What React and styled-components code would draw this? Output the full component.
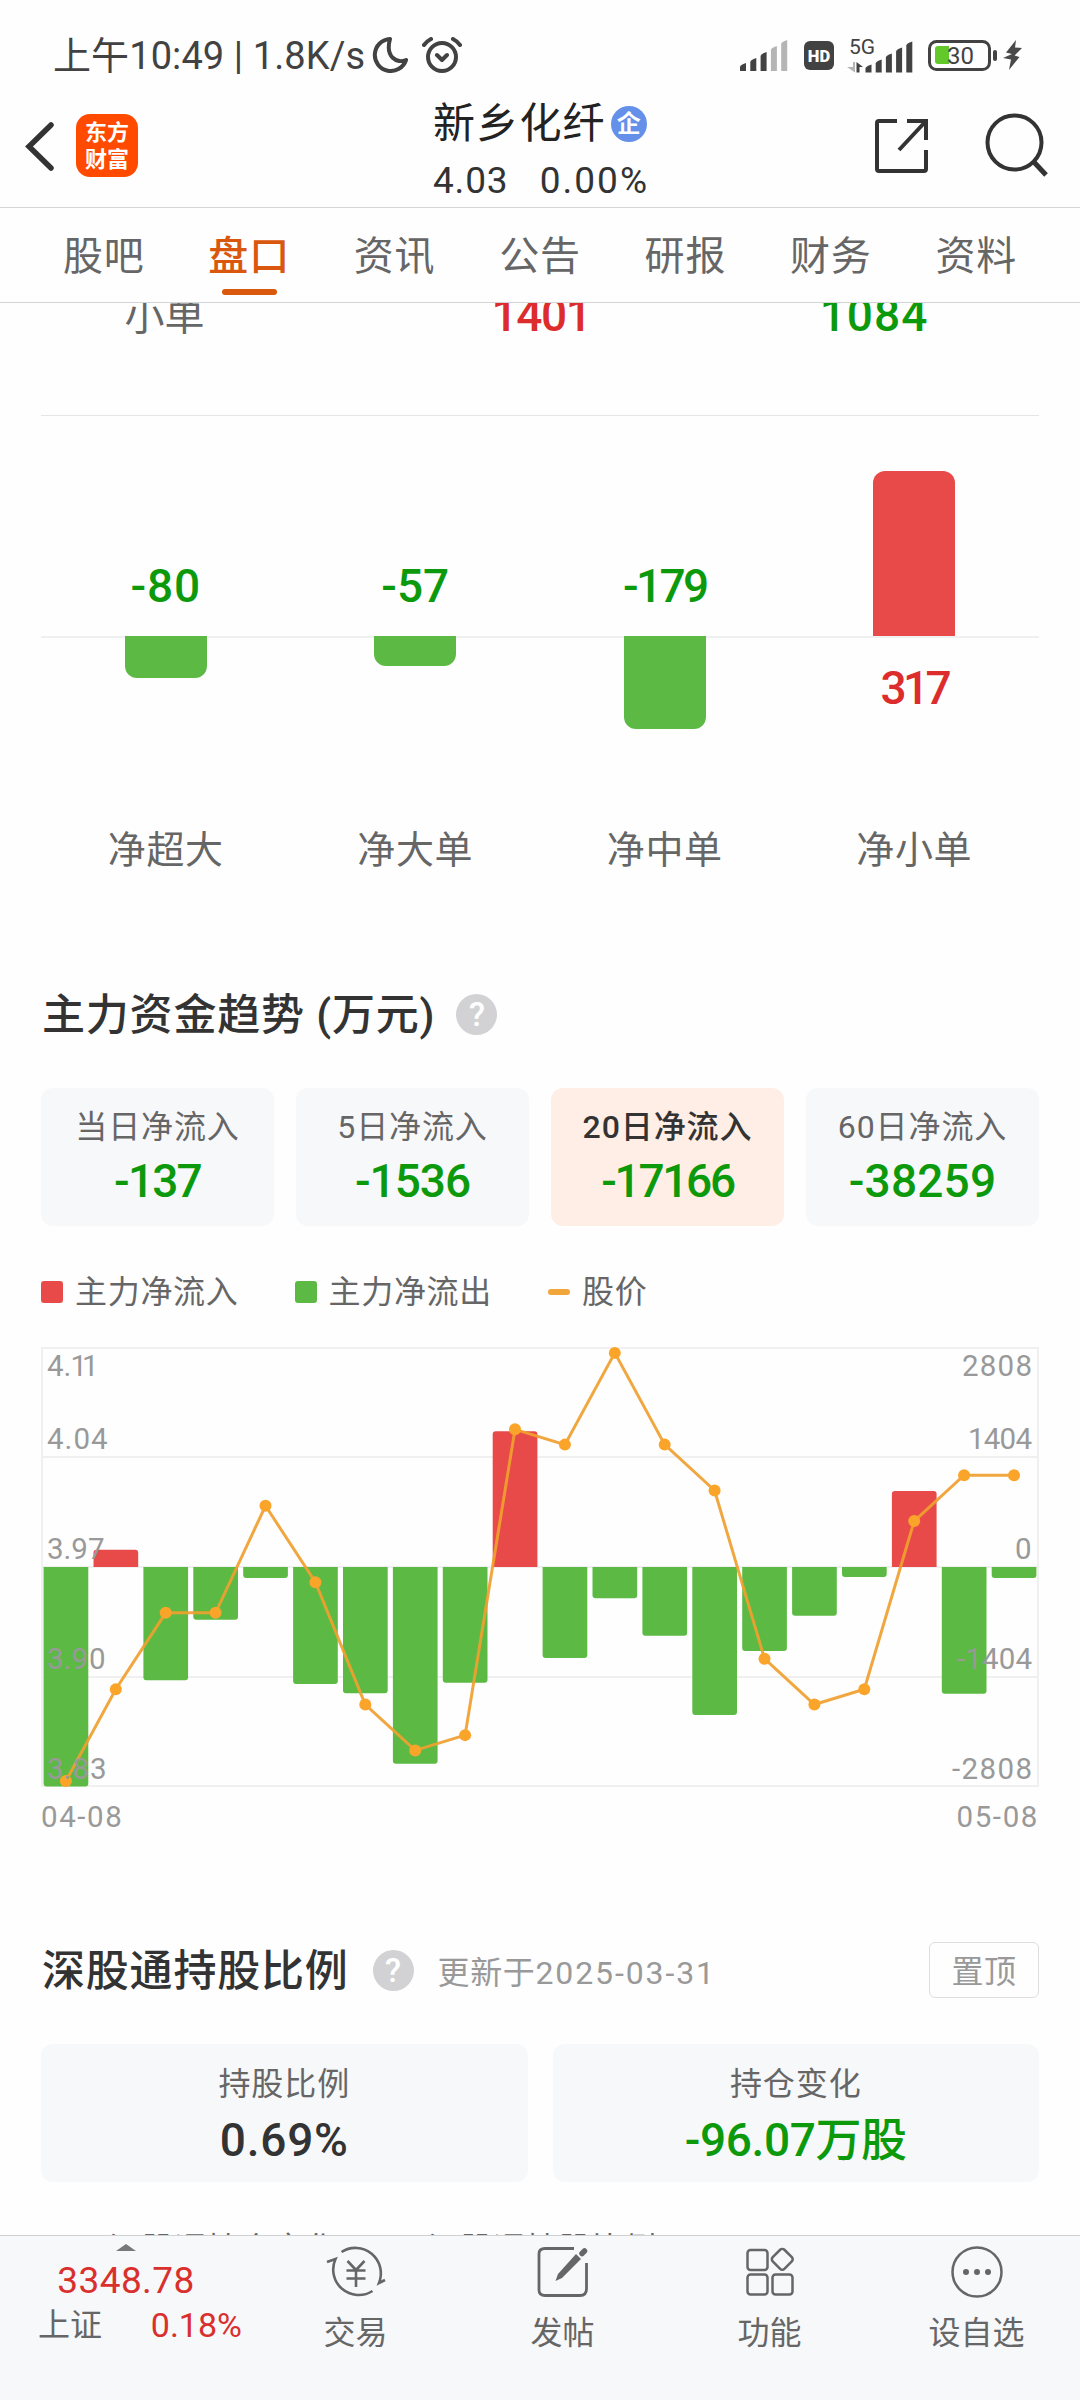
import styled, { createGlobalStyle } from 'styled-components'

const GlobalStyle = createGlobalStyle`
    * {
        box-sizing: border-box;
    }
    body {
        margin: 0;
        background: #fefefe;
        font-family: Roboto, "Noto Sans CJK SC", sans-serif;
        color: #333333;
    }
    svg {
        display: block;
        flex: none;
    }
`;

const Screen = styled.div`
    display: flex;
    flex-direction: column;
    width: 1080px;
    height: 2400px;
    overflow: hidden;
    background: #fefefe;
`;

/* status bar */
const StatusBar = styled.div`
    display: flex;
    align-items: center;
    height: 84px;
    padding: 26px 56px 0 53px;
    color: #424242;
`;
const StatusTime = styled.span`
    width: 319px;
    padding-top: 1px;
    font-size: 38px;
    line-height: 56px;
    letter-spacing: 0.1px;
    white-space: nowrap;
`;
const StatusIcons = styled.div`
    display: flex;
    align-items: center;
    margin-left: ${props => props.$right ? 'auto' : '0'};
    gap: ${props => props.$gap}px;
`;

/* header */
const Header = styled.div`
    display: grid;
    grid-template-columns: 1fr auto 1fr;
    height: 124px;
    border-bottom: 1px solid #d3d5d6;
`;
const HeaderLeft = styled.div`
    display: flex;
    align-items: flex-start;
    gap: 20px;
    padding: 30px 0 0 24px;
`;
const AppLogo = styled.div`
    display: grid;
    grid-template-columns: 22px 22px;
    align-content: center;
    justify-content: center;
    width: 62px;
    height: 63px;
    border-radius: 14px;
    background: #ff4a00;
    color: white;
    font-size: 22px;
    font-weight: 700;
    line-height: 27px;
`;
const HeaderTitle = styled.div`
    display: flex;
    flex-direction: column;
    width: 214px;
`;
const StockName = styled.div`
    display: flex;
    align-items: center;
    gap: 5px;
    height: 72px;
    padding-top: 7px;
    font-size: 42px;
    line-height: 66px;
    letter-spacing: 1.2px;
    color: #222222;
    white-space: nowrap;
`;
const CompanyBadge = styled.span`
    display: flex;
    align-items: center;
    justify-content: center;
    flex: none;
    width: 36px;
    height: 36px;
    border-radius: 50%;
    background: #6490ea;
    color: white;
    font-size: 24px;
    font-weight: 700;
    line-height: 36px;
    letter-spacing: 0;
`;
const StockPrice = styled.div`
    display: flex;
    justify-content: space-between;
    font-size: 37px;
    line-height: 44px;
    margin-top: 3px;
    letter-spacing: 0.8px;
    white-space: nowrap;
`;
const PriceRate = styled.span`
    letter-spacing: 2px;
    margin-right: -2px;
`;
const HeaderRight = styled.div`
    display: flex;
    justify-content: flex-end;
    align-items: flex-start;
    gap: 54px;
    padding: 28px 30px 0 0;
`;

/* tabs */
const Tabs = styled.div`
    display: flex;
    height: 95px;
    padding: 0 31px;
    border-bottom: 1px solid #d3d5d6;
`;
const Tab = styled.div`
    display: flex;
    flex-direction: column;
    align-items: center;
    flex: 1;
    padding-top: 20px;
    font-size: 40px;
    line-height: 58px;
    letter-spacing: 0.8px;
    color: ${props => props.$active ? '#d9580d' : '#666666'};
    font-weight: ${props => props.$active ? 500 : 400};
`;
const TabLine = styled.div`
    width: 55px;
    height: 6px;
    margin-top: 3px;
    border-radius: 3px;
    background: #d9580d;
`;

const Content = styled.div`
    flex: 1;
    min-height: 0;
    overflow: hidden;
    padding: 0 41px;
`;

/* order table, last row */
const OrderRow = styled.div`
    display: grid;
    grid-template-columns: 247px 506px 160px;
    height: 113px;
    border-bottom: 1px solid #e5e5e7;
    text-align: center;
`;
const OrderCell = styled.span`
    margin-top: ${props => props.$label ? '-15px' : '-17px'};
    font-size: ${props => props.$label ? 40 : 46}px;
    line-height: 58px;
    font-weight: ${props => props.$label ? 400 : 500};
    letter-spacing: ${props => props.$spacing || 0}px;
    color: ${props => props.$color};
`;

/* net amount bars */
const NetChart = styled.div`
    display: flex;
    height: 480px;
`;
const NetColumn = styled.div`
    display: flex;
    flex-direction: column;
    align-items: center;
    flex: 1;
`;
const NetHalf = styled.div`
    display: flex;
    flex-direction: column;
    align-items: center;
    justify-content: ${props => props.$top ? 'flex-end' : 'flex-start'};
    width: 100%;
    height: ${props => props.$top ? 220 : 186}px;
    box-shadow: ${props => props.$top ? 'none' : 'inset 0 2px 0 #f0f0f1'};
`;
const NetBar = styled.div`
    width: 82px;
    background: ${props => props.$up ? '#e84a49' : '#5cba44'};
    border-radius: ${props => props.$up ? '12px 12px 0 0' : '0 0 12px 12px'};
`;
const NetValue = styled.span`
    margin: ${props => props.$up ? '25px 0 0' : '0 0 23px'};
    font-size: 46px;
    line-height: 54px;
    font-weight: 500;
    letter-spacing: ${props => props.$spacing}px;
    color: ${props => props.$up ? '#dc2c2c' : '#0c9a0c'};
`;
const NetLabel = styled.span`
    font-size: 38px;
    line-height: 56px;
    letter-spacing: 0.6px;
    color: #666666;
`;

/* section headings */
const SectionTitle = styled.div`
    display: flex;
    align-items: center;
    height: 60px;
    margin-top: ${props => props.$top}px;
`;
const TitleText = styled.h2`
    margin: 2px ${props => props.$gap}px 0 1px;
    font-size: 43px;
    font-weight: 500;
    line-height: 60px;
    letter-spacing: 0.8px;
    color: #333333;
    white-space: pre;
`;
const HelpMark = styled.span`
    display: flex;
    align-items: center;
    justify-content: center;
    width: 41px;
    height: 41px;
    border-radius: 50%;
    background: #d2d2d5;
    color: white;
    font-size: 33px;
    font-weight: 500;
    line-height: 41px;
`;
const UpdateText = styled.span`
    margin-left: 24px;
    font-size: 32px;
    letter-spacing: 0.6px;
    color: #999999;
`;
const UpdateDate = styled.span`
    letter-spacing: 1.9px;
`;
const PinButton = styled.button`
    width: 110px;
    height: 56px;
    margin-left: auto;
    padding: 0 0 2px;
    border: 1px solid #dedee0;
    border-radius: 6px;
    background: transparent;
    color: #999999;
    font-family: inherit;
    font-size: 32px;
    letter-spacing: 0.6px;
`;

/* stat cards */
const Cards = styled.div`
    display: grid;
    grid-template-columns: repeat(${props => props.$count}, 1fr);
    gap: ${props => props.$gap}px;
    margin-top: 44px;
`;
const Card = styled.div`
    display: flex;
    flex-direction: column;
    align-items: center;
    height: 138px;
    padding-top: ${props => props.$wide ? 17 : 16}px;
    border-radius: 12px;
    background: ${props => props.$active ? '#ffeee5' : '#f7f8fa'};
`;
const CardLabel = styled.span`
    font-size: 32px;
    line-height: 46px;
    letter-spacing: 0.9px;
    font-weight: ${props => props.$active ? 500 : 400};
    color: ${props => props.$active ? '#333333' : '#666666'};
`;
const CardValue = styled.span`
    margin-top: ${props => props.$top || 4}px;
    font-size: 46px;
    line-height: 54px;
    font-weight: 500;
    letter-spacing: ${props => props.$spacing || 0}px;
    color: ${props => props.$dark ? '#333333' : '#0c9a0c'};
`;

/* legends */
const Legend = styled.div`
    display: flex;
    align-items: center;
    gap: ${props => props.$gap}px;
    height: 46px;
    margin-top: ${props => props.$top}px;
    padding-left: ${props => props.$left || 0}px;
`;
const LegendItem = styled.span`
    display: flex;
    align-items: center;
    gap: 12px;
    font-size: 32px;
    line-height: 46px;
    letter-spacing: 0.7px;
    color: #666666;
    white-space: nowrap;
`;
const LegendMark = styled.i`
    width: 22px;
    height: ${props => props.$line ? 6 : 22}px;
    border-radius: 3px;
    background: ${props => props.$color};
`;

const TrendSvg = styled.svg`
    margin-top: 32px;
    overflow: visible;
`;
const AxisText = styled.text`
    font-size: 29.5px;
    fill: #999999;
`;
const DateRow = styled.div`
    display: flex;
    justify-content: space-between;
    margin-top: 10px;
    font-size: 29.5px;
    line-height: 40px;
    letter-spacing: 1.6px;
    color: #999999;
`;

/* bottom bar */
const BottomBar = styled.div`
    display: flex;
    height: 165px;
    border-top: 1px solid #cfd1d3;
    background: #f7f8fa;
`;
const IndexBox = styled.div`
    display: flex;
    flex-direction: column;
    align-items: center;
    width: 252px;
    padding-top: 8px;
`;
const IndexValue = styled.span`
    margin-top: 8px;
    font-size: 37px;
    line-height: 44px;
    letter-spacing: 0.4px;
    color: #d9302e;
`;
const IndexRow = styled.div`
    display: flex;
    justify-content: space-between;
    width: 204px;
    margin-left: 28px;
    font-size: 32px;
    line-height: 44px;
    color: #666666;
`;
const IndexRate = styled.span`
    font-size: 34px;
    color: #d9302e;
`;
const NavItem = styled.div`
    display: flex;
    flex-direction: column;
    align-items: center;
    flex: 1;
    padding-top: 8px;
    font-size: 32px;
    line-height: 46px;
    color: #666666;
`;
const NavLabel = styled.span`
    margin-top: 10px;
`;

const tabs = ['股吧', '盘口', '资讯', '公告', '研报', '财务', '资料']

const netData = [
    { label: '净超大', value: -80, size: 42, spacing: 0.8 },
    { label: '净大单', value: -57, size: 30, spacing: 0 },
    { label: '净中单', value: -179, size: 93, spacing: -2.6 },
    { label: '净小单', value: 317, size: 165, spacing: -3.6 },
]

const periods = [
    { label: '当日净流入', value: '-137', spacing: -1.8 },
    { label: '5日净流入', value: '-1536', spacing: -1 },
    { label: '20日净流入', value: '-17166', spacing: -2.3, active: true },
    { label: '60日净流入', value: '-38259', spacing: 0.2 },
]

const flows = [
    -2808, 221, -1449, -674, -141, -1496, -1615, -2516, -1479, 1735,
    -1164, -400, -878, -1893, -1074, -623, -128, 972, -1620, -141,
]
const prices = [
    3.83, 3.89, 3.94, 3.94, 4.01, 3.96, 3.88, 3.85, 3.86, 4.06,
    4.05, 4.11, 4.05, 4.02, 3.91, 3.88, 3.89, 4.0, 4.03, 4.03,
]
const axis = [
    { y: 29, left: '4.11', kern: '0 0 -1 -5', right: '2808', rightWidth: 70 },
    { y: 102, left: '4.04', kern: '0 1 1 1', right: '1404', rightWidth: 64 },
    { y: 212, left: '3.97', kern: '0', right: '0', rightWidth: 17 },
    { y: 322, left: '3.90', kern: '0 0 0 1', right: '-1404', rightWidth: 75 },
    { y: 432, left: '3.83', kern: '0 0 1 1', right: '-2808', rightWidth: 80 },
]

const Signal = ({ level }) => (
    <svg width="48" height="31" viewBox="0 0 48 31">
        {[0, 1, 2, 3, 4].map(i => {
            const x = i * 10.3
            const y = [23, 18, 12, 6, 0][i]
            return (
                <path
                    key={i}
                    d={`M${x} ${y + 4} Q${x} ${y + 2} ${x + 6} ${y} V31 H${x} Z`}
                    fill={i < level ? '#424242' : '#b5b5b5'}
                />
            )
        })}
    </svg>
)

const NetworkIcon = () => (
    <svg width="68" height="38" viewBox="0 0 68 38">
        <text x="3" y="18" fontSize="21" fill="#424242" textLength="26">5G</text>
        <path d="M7 26 H9 V36.500 L1 31 H7 Z" fill="#b5b5b5" />
        <path d="M10.500 36.500 V26 L17 31 H13.500 V36.500 Z" fill="#424242" />
        {[0, 1, 2, 3, 4].map(i => {
            const x = 19.5 + i * 10.2
            const y = [28.5, 23.5, 17.5, 11.5, 5.5][i]
            return (
                <path
                    key={i}
                    d={`M${x} ${y + 4} Q${x} ${y + 2} ${x + 6} ${y} V36.500 H${x} Z`}
                    fill="#424242"
                />
            )
        })}
    </svg>
)

const StatusComponent = () => {
    return (
        <StatusBar>
            <StatusTime>上午10:49 | 1.8K/s</StatusTime>
            <StatusIcons $gap={14}>
                <svg width="36" height="36" viewBox="0 0 36 36" fill="none" stroke="#424242" strokeWidth="4" strokeLinejoin="round">
                    <path d="M18 2 A16 16 0 1 0 34 23 C25 27 13 20 18 2 Z" />
                </svg>
                <svg width="40" height="36" viewBox="0 0 40 36" fill="none" stroke="#424242" strokeWidth="4" strokeLinecap="round" strokeLinejoin="round">
                    <circle cx="20" cy="20" r="14" />
                    <path d="M2 8 Q5 4 9 2 M38 8 Q35 4 31 2 M15 18 L20 23 L25 18" />
                </svg>
            </StatusIcons>
            <StatusIcons $right $gap={0}>
                <Signal level={3} />
                <svg width="58" height="31" viewBox="0 0 58 31">
                    <rect x="16" y="1" width="30" height="29" rx="6" fill="#424242" />
                    <text x="31" y="21.500" fontSize="16.500" fontWeight="900" fill="#ffffff" textAnchor="middle">HD</text>
                </svg>
                <NetworkIcon />
                <svg width="110" height="31" viewBox="0 0 110 31">
                    <rect x="15.500" y="1.500" width="60" height="28" rx="7" fill="none" stroke="#424242" strokeWidth="3" />
                    <path d="M24 6 H35 V24 H24 Q21 24 21 21 V9 Q21 6 24 6 Z" fill="#63c82a" />
                    <text x="46.500" y="24" fontSize="24" fill="#424242" textAnchor="middle">30</text>
                    <rect x="79" y="10" width="4" height="11" rx="2" fill="#424242" />
                    <path d="M102 0 L92 12.500 L98 14 L89 18 L97 19.500 L95 30 L105.500 17 L100.500 15.500 L108 8 L101 7.500 Z" fill="#4a4a4a" />
                </svg>
            </StatusIcons>
        </StatusBar>
    )
}

const HeaderComponent = () => {
    return (
        <Header>
            <HeaderLeft>
                <svg width="32" height="63" viewBox="0 0 32 63" fill="none" stroke="#333333" strokeWidth="5.500" strokeLinecap="round">
                    <path d="M27 11 L5 32.500 L27 54" />
                </svg>
                <AppLogo>
                    <span>东</span><span>方</span><span>财</span><span>富</span>
                </AppLogo>
            </HeaderLeft>
            <HeaderTitle>
                <StockName>
                    新乡化纤
                    <CompanyBadge>企</CompanyBadge>
                </StockName>
                <StockPrice>
                    <span>4.03</span>
                    <PriceRate>0.00%</PriceRate>
                </StockPrice>
            </HeaderTitle>
            <HeaderRight>
                <svg width="56" height="64" viewBox="0 0 56 64" fill="none" stroke="#333333" strokeWidth="4">
                    <path d="M23 9 H5 Q3 9 3 11 V57 Q3 59 5 59 H50 Q52 59 52 57 V38 M33 9 H52 V28 M52 9 L25 38" />
                </svg>
                <svg width="66" height="66" viewBox="0 0 66 66" fill="none" stroke="#333333" strokeWidth="4">
                    <circle cx="30.500" cy="30.500" r="27" />
                    <path d="M49 49 L62 63" strokeWidth="5" />
                </svg>
            </HeaderRight>
        </Header>
    )
}

const NetComponent = () => {
    return (
        <NetChart>
            {netData.map(item => {
                const up = item.value > 0
                const value = <NetValue $up={up} $spacing={item.spacing}>{item.value}</NetValue>
                const bar = <NetBar $up={up} style={{ height: item.size }} />
                return (
                    <NetColumn key={item.label}>
                        <NetHalf $top>{up ? bar : value}</NetHalf>
                        <NetHalf>{up ? value : bar}</NetHalf>
                        <NetLabel>{item.label}</NetLabel>
                    </NetColumn>
                )
            })}
        </NetChart>
    )
}

const TrendComponent = () => {
    const step = 49.9
    const zero = 220
    const points = prices.map((price, i) => [
        24.9 + i * step,
        434 - (price - 3.83) * 1529,
    ])
    return (
        <TrendSvg width="998" height="440" viewBox="0 0 998 440">
            <g fill="none" stroke="#f0f0f1" strokeWidth="2">
                <rect x="1" y="1" width="996" height="438" />
                <path d="M0 110 H998 M0 220 H998 M0 330 H998" />
            </g>
            {flows.map((flow, i) => {
                const h = Math.abs(flow) / 12.79
                const x = 2.6 + i * step
                const d = flow > 0
                    ? `M${x} ${zero} V${zero - h + 3} q0 -3 3 -3 h38.700 q3 0 3 3 V${zero} Z`
                    : `M${x} ${zero} V${zero + h - 3} q0 3 3 3 h38.700 q3 0 3 -3 V${zero} Z`
                return <path key={i} d={d} fill={flow > 0 ? '#e84a49' : '#5cba44'} />
            })}
            <polyline
                points={points.map(p => p.join(',')).join(' ')}
                fill="none"
                stroke="#f0a030"
                strokeOpacity="0.92"
                strokeWidth="3"
            />
            {points.map(([x, y], i) => (
                <circle key={i} cx={x} cy={y} r="6" fill="#fba42a" />
            ))}
            {axis.map(row => (
                <g key={row.y}>
                    <AxisText x="6" y={row.y} dx={row.kern}>{row.left}</AxisText>
                    <AxisText x={991 - row.rightWidth} y={row.y} textLength={row.rightWidth}>{row.right}</AxisText>
                </g>
            ))}
        </TrendSvg>
    )
}

const TradeIcon = () => (
    <svg width="60" height="56" viewBox="0 0 60 56" fill="none" stroke="#666666" strokeWidth="2.600">
        <path d="M15.500 8 A25.500 25.500 0 0 1 53 39 L59 36" />
        <path d="M46.500 47 A25.500 25.500 0 0 1 9.500 15 L1 18" />
        <path d="M21.500 17 L30 26 L38.500 17 M20.500 26.500 H39.500 M20.500 34.500 H39.500 M30 26 V43" />
    </svg>
)

const PostIcon = () => (
    <svg width="52" height="56" viewBox="0 0 52 56" fill="none" stroke="#666666" strokeWidth="2.800">
        <path d="M37 4.500 H8 Q2 4.500 2 10 V46 Q2 51.500 8 51.500 H43 Q49.500 51.500 49.500 45 V19" />
        <path d="M39 10 L44 15 L25 34 L18.500 37 L21 30 Z" fill="#666666" stroke="none" />
        <path d="M45 9.500 L47.500 7" strokeWidth="5.500" strokeLinecap="round" />
    </svg>
)

const AppsIcon = () => (
    <svg width="50" height="56" viewBox="0 0 50 56" fill="none" stroke="#666666" strokeWidth="2.500">
        <rect x="2.500" y="6" width="20" height="20" rx="3" />
        <rect x="2.500" y="30.500" width="20" height="20" rx="3" />
        <rect x="27.500" y="30.500" width="20" height="20" rx="3" />
        <rect x="29" y="7" width="16.500" height="16.500" rx="3" transform="rotate(45 37.200 15.300)" />
    </svg>
)

const MoreIcon = () => (
    <svg width="56" height="56" viewBox="0 0 56 56" fill="#666666">
        <circle cx="28" cy="28" r="24.500" fill="none" stroke="#666666" strokeWidth="2.500" />
        <circle cx="17" cy="28" r="3" />
        <circle cx="28" cy="28" r="3" />
        <circle cx="39" cy="28" r="3" />
    </svg>
)

const BottomComponent = () => {
    return (
        <BottomBar>
            <IndexBox>
                <svg width="20" height="7" viewBox="0 0 20 7">
                    <path d="M0 7 L10 0 L20 7 Z" fill="#77787a" />
                </svg>
                <IndexValue>3348.78</IndexValue>
                <IndexRow>
                    <span>上证</span>
                    <IndexRate>0.18%</IndexRate>
                </IndexRow>
            </IndexBox>
            <NavItem>
                <TradeIcon />
                <NavLabel>交易</NavLabel>
            </NavItem>
            <NavItem>
                <PostIcon />
                <NavLabel>发帖</NavLabel>
            </NavItem>
            <NavItem>
                <AppsIcon />
                <NavLabel>功能</NavLabel>
            </NavItem>
            <NavItem>
                <MoreIcon />
                <NavLabel>设自选</NavLabel>
            </NavItem>
        </BottomBar>
    )
}

const App = () => {
    return (
        <Screen>
            <GlobalStyle />
            <StatusComponent />
            <HeaderComponent />
            <Tabs>
                {tabs.map(tab => (
                    <Tab key={tab} $active={tab === '盘口'}>
                        {tab}
                        {tab === '盘口' && <TabLine />}
                    </Tab>
                ))}
            </Tabs>
            <Content>
                <OrderRow>
                    <OrderCell $label $color="#666666">小单</OrderCell>
                    <OrderCell $color="#dc2c2c" $spacing={-1.4}>1401</OrderCell>
                    <OrderCell $color="#0c9a0c" $spacing={1}>1084</OrderCell>
                </OrderRow>
                <NetComponent />
                <SectionTitle $top={88}>
                    <TitleText $gap={21}>主力资金趋势 (万元)</TitleText>
                    <HelpMark>?</HelpMark>
                </SectionTitle>
                <Cards $count={4} $gap={22}>
                    {periods.map(item => (
                        <Card key={item.label} $active={item.active}>
                            <CardLabel $active={item.active}>{item.label}</CardLabel>
                            <CardValue $spacing={item.spacing}>{item.value}</CardValue>
                        </Card>
                    ))}
                </Cards>
                <Legend $top={43} $gap={56}>
                    <LegendItem><LegendMark $color="#e84a49" />主力净流入</LegendItem>
                    <LegendItem><LegendMark $color="#5cba44" />主力净流出</LegendItem>
                    <LegendItem><LegendMark $line $color="#f0a63a" />股价</LegendItem>
                </Legend>
                <TrendComponent />
                <DateRow>
                    <span>04-08</span>
                    <span>05-08</span>
                </DateRow>
                <SectionTitle $top={103}>
                    <TitleText $gap={24}>深股通持股比例</TitleText>
                    <HelpMark>?</HelpMark>
                    <UpdateText>更新于<UpdateDate>2025-03-31</UpdateDate></UpdateText>
                    <PinButton>置顶</PinButton>
                </SectionTitle>
                <Cards $count={2} $gap={25}>
                    <Card $wide>
                        <CardLabel>持股比例</CardLabel>
                        <CardValue $dark $top={6} $spacing={0.8}>0.69%</CardValue>
                    </Card>
                    <Card $wide>
                        <CardLabel>持仓变化</CardLabel>
                        <CardValue $top={6} $spacing={-0.4}>-96.07万股</CardValue>
                    </Card>
                </Cards>
                <Legend $top={44} $gap={56} $left={34}>
                    <LegendItem><LegendMark $color="#5b8ff0" />深股通持仓变化</LegendItem>
                    <LegendItem><LegendMark $line $color="#f0a63a" />深股通持股比例</LegendItem>
                </Legend>
            </Content>
            <BottomComponent />
        </Screen>
    )
}

export default App;
